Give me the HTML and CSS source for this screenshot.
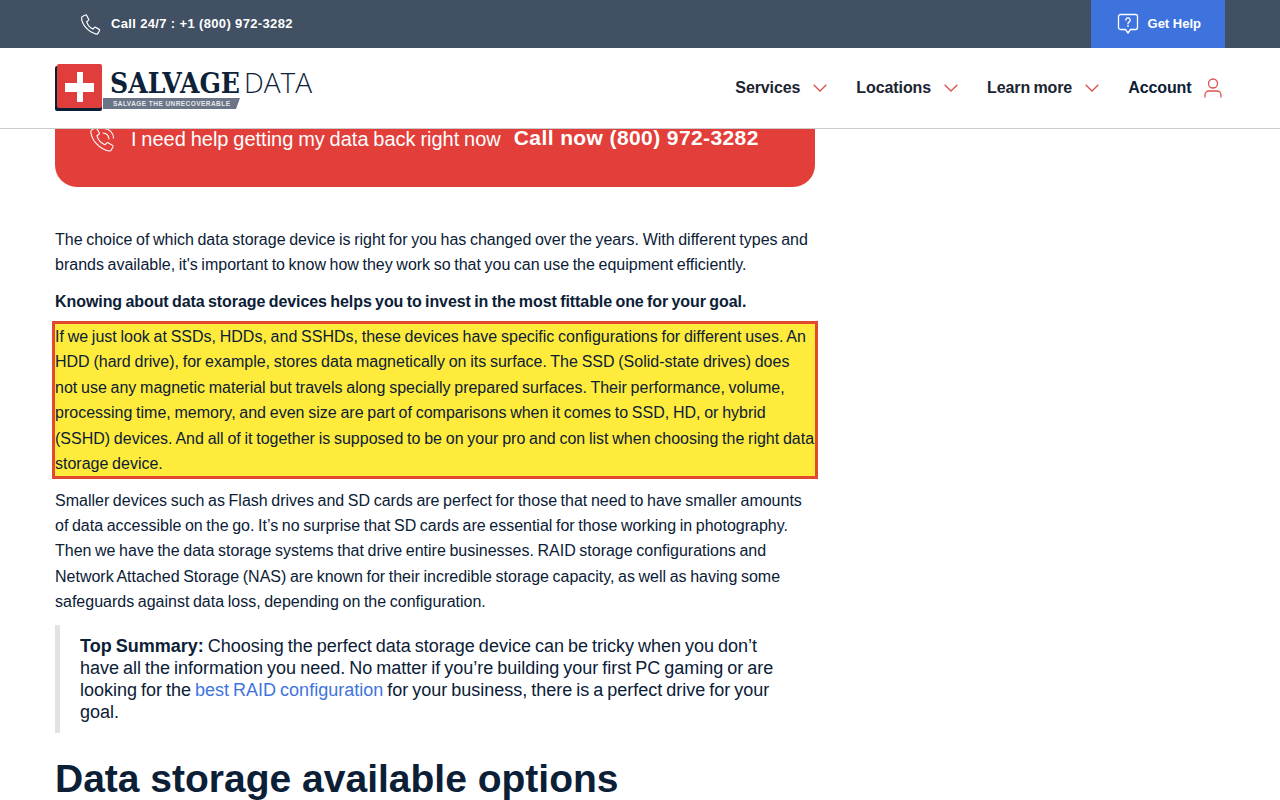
FILE: index.html
```html
<!DOCTYPE html>
<html lang="en">
<head>
  <meta charset="UTF-8" />
  <meta name="viewport" content="width=device-width, initial-scale=1.0"/>
  <title>Data storage devices</title>
  <link rel="stylesheet" href="styles.css">
</head>
<body>

  <!-- Header -->
  <div class="site-header">
    <div class="topbar">
      <div class="wrap topbar-inner">
        <a class="call" href="#">
          <svg class="call-icon" viewBox="0 0 24 24" fill="none" stroke="currentColor" stroke-width="1.4" stroke-linejoin="round"><path d="M3.2 2.6 6.4 1.2a1 1 0 0 1 1.3.5l2.2 4.4a1 1 0 0 1-.3 1.2L7.6 8.800c.9 3.300 3.700 6.800 7.200 8.400l1.700-1.900a1 1 0 0 1 1.200-.2l4.200 2.500a1 1 0 0 1 .4 1.300l-1.600 3a2 2 0 0 1-2.200 1C9.500 20.800 2.500 12.500 1.800 4.800a2 2 0 0 1 1.400-2.200Z"/></svg>
          <span>Call 24/7 : +1 (800) 972-3282</span>
        </a>
        <a class="get-help" href="#">
          <svg class="help-icon" viewBox="0 0 22 22" fill="none" stroke="currentColor" stroke-width="1.300" stroke-linejoin="round"><path d="M3.500 1.500h15a2 2 0 0 1 2 2v11a2 2 0 0 1-2 2h-5L11 20l-2.500-3.500h-5a2 2 0 0 1-2-2v-11a2 2 0 0 1 2-2Z"/><path d="M8.800 7a2.200 2.200 0 1 1 3.400 1.900c-.8.500-1.200.9-1.200 1.800M11 12.500v1" stroke-linecap="round"/></svg>
          <span>Get Help</span>
        </a>
      </div>
    </div>
    <div class="navbar">
      <div class="wrap navbar-inner">
        <a class="logo" href="#">
          <svg viewBox="0 0 290 48" width="290" height="48">
            <rect x="0" y="2" width="47" height="45" rx="2" fill="#0a1f35"/>
            <rect x="2" y="0" width="45" height="44" rx="2" fill="#e03e3c"/>
            <path d="M22 8h6v11h11v9H28v10h-6V28H10v-9h12Z" fill="#fff"/>
            <path d="M48 34h137l-4 11H48Z" fill="#6b7588"/>
            <text x="55" y="29" class="logo-salvage" textLength="130" lengthAdjust="spacingAndGlyphs">SALVAGE</text>
            <text x="189" y="29" class="logo-data">DATA</text>
            <text x="58" y="42" class="logo-tag" textLength="117" lengthAdjust="spacing">SALVAGE THE UNRECOVERABLE</text>
          </svg>
        </a>
        <ul class="menu">
          <li><a href="#">Services</a><svg class="chev" viewBox="0 0 14 8" fill="none" stroke="currentColor" stroke-width="1.300"><path d="m.7.7 6.300 6.300L13.300.7"/></svg></li>
          <li><a href="#">Locations</a><svg class="chev" viewBox="0 0 14 8" fill="none" stroke="currentColor" stroke-width="1.300"><path d="m.7.7 6.300 6.300L13.300.7"/></svg></li>
          <li><a href="#">Learn more</a><svg class="chev" viewBox="0 0 14 8" fill="none" stroke="currentColor" stroke-width="1.300"><path d="m.7.7 6.300 6.300L13.300.7"/></svg></li>
          <li class="account"><a href="#">Account</a><svg class="user" viewBox="0 0 18 20" fill="none" stroke="currentColor" stroke-width="1.300"><circle cx="9" cy="5.500" r="4.500"/><path d="M1 19.500v-2.500a4 4 0 0 1 4-4h8a4 4 0 0 1 4 4v2.500"/></svg></li>
        </ul>
      </div>
    </div>
  </div>

  <!-- Article -->
  <div class="wrap">
    <div class="article">
      <a class="call-banner" href="#">
        <svg class="banner-icon" viewBox="0 0 28 28" fill="none" stroke="currentColor" stroke-width="1.100" stroke-linejoin="round" stroke-linecap="round"><path d="M4.500 3.500 7.500 2a1 1 0 0 1 1.300.4l2.500 4.700a1 1 0 0 1-.3 1.200L9 9.800c1 3.500 4.200 7.300 8 9l1.800-1.900a1 1 0 0 1 1.200-.2l4.600 2.700a1 1 0 0 1 .4 1.300l-1.700 3.200a2.200 2.200 0 0 1-2.400 1.100C11 23 3.500 14 2.800 5.700a2.200 2.200 0 0 1 1.700-2.200Z"/><path d="M15 7a6 6 0 0 1 6 6M16 2.500a9.500 9.500 0 0 1 9.500 9.500"/></svg>
        <span class="banner-text">I need help getting my data back right now</span>
        <strong class="banner-call">Call now (800) 972-3282</strong>
      </a>

      <p>The choice of which data storage device is right for you has changed over the years. With different types and brands available, it's important to know how they work so that you can use the equipment efficiently.</p>
      <p class="lead"><strong>Knowing about data storage devices helps you to invest in the most fittable one for your goal.</strong></p>
      <p class="highlight">If we just look at SSDs, HDDs, and SSHDs, these devices have specific configurations for different uses. An HDD (hard drive), for example, stores data magnetically on its surface. The SSD (Solid-state drives) does not use any magnetic material but travels along specially prepared surfaces. Their performance, volume, processing time, memory, and even size are part of comparisons when it comes to SSD, HD, or hybrid (SSHD) devices. And all of it together is supposed to be on your pro and con list when choosing the right data storage device.</p>
      <p>Smaller devices such as Flash drives and SD cards are perfect for those that need to have smaller amounts of data accessible on the go. It’s no surprise that SD cards are essential for those working in photography. Then we have the data storage systems that drive entire businesses. RAID storage configurations and Network Attached Storage (NAS) are known for their incredible storage capacity, as well as having some safeguards against data loss, depending on the configuration.</p>

      <blockquote class="summary">
        <strong>Top Summary:</strong> Choosing the perfect data storage device can be tricky when you don’t have all the information you need. No matter if you’re building your first PC gaming or are looking for the <a href="#">best RAID configuration</a> for your business, there is a perfect drive for your goal.
      </blockquote>

      <h2>Data storage available options</h2>
    </div>
  </div>

</body>
</html>
```

FILE: styles.css
```css
/* General */
body {
  margin: 0;
  padding: 0;
  background: #fff;
  color: #0b2036;
  font-family: "Liberation Sans", Arial, sans-serif;
  font-size: 16px;
  line-height: 25.4px;
  overflow: hidden;
}
a {
  color: inherit;
  text-decoration: none;
}
.wrap {
  width: 1170px;
  margin: 0 auto;
}

/* Header */
.site-header {
  position: fixed;
  top: 0;
  left: 0;
  width: 100%;
  z-index: 10;
}
.topbar {
  background: #415063;
  height: 48px;
  color: #fff;
}
.topbar-inner {
  display: flex;
  justify-content: space-between;
  height: 100%;
}
.call {
  display: flex;
  align-items: center;
  gap: 10px;
  padding-left: 25px;
  font-size: 13px;
  font-weight: bold;
  letter-spacing: 0.35px;
}
.call-icon {
  width: 21px;
  height: 23px;
}
.get-help {
  display: flex;
  align-items: center;
  gap: 9px;
  padding: 0 24px 0 26px;
  background: #3e73de;
  font-size: 13px;
  font-weight: bold;
}
.help-icon {
  width: 22px;
  height: 22px;
}
.navbar {
  background: #fff;
  height: 80px;
  border-bottom: 1px solid #ccc;
}
.navbar-inner {
  display: flex;
  justify-content: space-between;
  align-items: center;
  height: 100%;
}
.logo {
  display: flex;
}
.logo-salvage {
  font-family: "DejaVu Serif", serif;
  font-weight: bold;
  font-size: 27px;
  fill: #0d2238;
}
.logo-data {
  font-family: "Open Sans", sans-serif;
  font-weight: 300;
  font-size: 28px;
  fill: #0d2238;
}
.logo-tag {
  font-family: "Liberation Sans", sans-serif;
  font-weight: bold;
  font-size: 6.500px;
  fill: #e6e8ec;
}
.menu {
  list-style: none;
  margin: 0;
  padding: 0;
  display: flex;
  align-items: center;
  gap: 29px;
  font-size: 16px;
  font-weight: bold;
  color: #1b2430;
  word-spacing: -1px;
  letter-spacing: -0.1px;
}
.menu li {
  display: flex;
  align-items: center;
  gap: 13px;
}
.menu .account {
  color: #0b2036;
  gap: 12.5px;
  padding-right: 3px;
}
.chev {
  width: 14px;
  height: 8px;
  color: #d9534f;
}
.user {
  width: 18px;
  height: 20px;
  color: #d9534f;
}

/* Article */
.article {
  width: 760px;
  padding-top: 91px;
  word-spacing: -0.85px;
}
.call-banner {
  display: flex;
  align-items: flex-start;
  height: 96px;
  padding: 35px 0 0 33px;
  box-sizing: border-box;
  background: #e23e3a;
  border-radius: 0 0 22px 22px;
  color: #fff;
  margin-bottom: 40px;
}
.banner-icon {
  width: 28px;
  height: 28px;
  margin-right: 15px;
}
.banner-text {
  font-size: 20px;
  line-height: 26px;
  margin-right: 13px;
  word-spacing: -0.75px;
}
.banner-call {
  font-size: 21px;
  line-height: 24px;
  letter-spacing: 0.4px;
  word-spacing: 0;
}
.article p {
  margin: 0 0 11.6px;
}
.article .lead {
  margin-bottom: 9.2px;
  word-spacing: -1px;
  letter-spacing: -0.07px;
}
.article .highlight {
  background: #ffeb3b;
  outline: 3px solid #e2492f;
  margin-bottom: 11.2px;
  word-spacing: -0.7px;
}
.summary {
  margin: -1.6px 0 0;
  padding: 10px 30px 10px 20px;
  border-left: 5px solid #e2e2e2;
  font-size: 18px;
  line-height: 22px;
  word-spacing: -1px;
}
.summary a {
  color: #3e73de;
}
h2 {
  margin: 23px 0 0;
  font-size: 39px;
  line-height: 46px;
  font-weight: bold;
  color: #0b2036;
  word-spacing: 0;
}
```
